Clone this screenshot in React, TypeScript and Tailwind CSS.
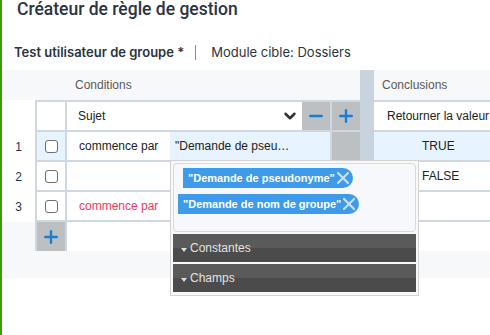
import { ChevronDown, Minus, Plus, X } from 'lucide-react'

const rows = [
  { n: '1', op: 'commence par', value: '"Demande de pseu…', result: 'TRUE', active: true, warn: false },
  { n: '2', op: '', value: '', result: 'FALSE', active: false, warn: false },
  { n: '3', op: 'commence par', value: '', result: '', active: false, warn: true },
]

function Checkbox() {
  return <span className="block w-[13px] h-[13px] rounded-[3px] border-[1.5px] border-[#6f6f6f] bg-white" />
}

function Chip({ label, className }: { label: string; className?: string }) {
  return (
    <div className={`flex items-center h-[20px] pl-[5px] pr-[2px] bg-[#3d9be9] rounded-l-[2px] rounded-r-full text-white text-[11px] font-bold w-fit ${className ?? ''}`}>
      <span>{label}</span>
      <X size={20} strokeWidth={2.6} className="text-[#cde0f3] -ml-[2px] -mr-[2px]" />
    </div>
  )
}

function Section({ label }: { label: string }) {
  return (
    <div className="h-[28px] flex items-center pl-[8px] gap-[3px] bg-[linear-gradient(#5a5a5a_50%,#4b4b4b_50%)] text-[#e2e2e2] text-[12px]">
      <svg width="6" height="4" viewBox="0 0 6 4" className="mt-[3px]">
        <path d="M0 0h6L3 4z" fill="#dcdcdc" />
      </svg>
      <span>{label}</span>
    </div>
  )
}

export default function App() {
  return (
    <div className="w-[490px] h-[335px] overflow-hidden bg-white border-l-2 border-[#3f9b0b] font-['Liberation_Sans',Arial,sans-serif]">
      {/* Title */}
      <div className="pl-[15px] text-[17.5px] leading-[18px] font-medium text-[#2b3440] font-['Roboto',sans-serif]">
        Créateur de règle de gestion
      </div>
      <div className="pl-[12px] mt-[26px] h-[16px] flex items-center text-[13px] leading-[16px] text-[#2b3440] font-['Inter',sans-serif]">
        <span className="font-semibold">Test utilisateur de groupe *</span>
        <span className="ml-[11px] w-px h-[15px] bg-[#8a8f96]" />
        <span className="ml-[15px]">Module cible: Dossiers</span>
      </div>

      {/* Rule table */}
      <div className="relative mt-[10px] h-[208px] bg-[#f7f8fa] text-[12px] text-[#222]">
        <div className="flex h-[30px]">
          <div className="w-[358px] flex items-center pl-[73px] text-[#5a5a5a]">Conditions</div>
          <div className="w-[14px] bg-[#c9d3dd]" />
          <div className="flex-1 flex items-center pl-[8px] text-[#5a5a5a]">Conclusions</div>
        </div>

        <div className="flex h-[32px]">
          <div className="w-[33px] bg-white" />
          <div className="w-[32px] bg-white border-2 border-[#cfd8e1]" />
          <div className="w-[235px] bg-white border-y-2 border-[#cfd8e1] flex items-center justify-between pl-[11px] pr-[3px]">
            <span>Sujet</span>
            <ChevronDown size={18} strokeWidth={3.3} className="text-[#333]" />
          </div>
          <div className="w-[28px] bg-[#bcc0c3] border-y-2 border-[#cfd8e1] flex items-center justify-center">
            <Minus size={20} strokeWidth={2.8} className="text-[#1a7dd3]" />
          </div>
          <div className="w-[30px] bg-[#bcc0c3] border-y-2 border-l-2 border-[#cfd8e1] flex items-center justify-center">
            <Plus size={20} strokeWidth={2.8} className="text-[#1a7dd3]" />
          </div>
          <div className="w-[14px] bg-[#c9d3dd]" />
          <div className="flex-1 bg-white border-y-2 border-[#cfd8e1] flex items-center pl-[13px] whitespace-nowrap overflow-hidden">
            Retourner la valeur
          </div>
        </div>

        {rows.map((r) => (
          <div key={r.n} className="flex h-[30px]">
            <div className="w-[33px] bg-white flex items-center justify-center text-[#1e3550]">{r.n}</div>
            <div className={`w-[32px] border-x-2 border-b-2 border-[#cfd8e1] flex items-center justify-center ${r.active ? 'bg-[#e7f3fe]' : 'bg-white'}`}>
              <Checkbox />
            </div>
            <div className={`w-[103px] bg-white border-b-2 border-[#cfd8e1] flex items-center pl-[12px] ${r.warn ? 'text-[#ee3a5c]' : ''}`}>
              {r.op}
            </div>
            <div className={`w-[160px] border-b-2 border-[#cfd8e1] flex items-center pl-[5px] whitespace-nowrap ${r.active ? 'bg-[#e7f3fe]' : 'bg-white'}`}>
              {r.value}
            </div>
            <div className={`w-[30px] border-l-2 border-b-2 border-[#cfd8e1] ${r.active ? 'bg-[#bcc0c3]' : 'bg-white'}`} />
            <div className="w-[14px] bg-[#c9d3dd]" />
            <div className={`flex-1 border-b-2 border-[#cfd8e1] flex items-center pl-[48px] ${r.active ? 'bg-[#e7f3fe]' : 'bg-white'}`}>
              {r.result}
            </div>
          </div>
        ))}

        <div className="flex h-[29px]">
          <div className="w-[33px]" />
          <div className="w-[32px] bg-[#bcc0c3] border-x-2 border-[#cfd8e1] flex items-center justify-center">
            <Plus size={20} strokeWidth={2.8} className="text-[#1a7dd3]" />
          </div>
          <div className="w-[293px] bg-white" />
          <div className="w-[14px] bg-[#c9d3dd]" />
          <div className="flex-1 bg-white" />
        </div>

        {/* Value picker popup */}
        <div className="absolute left-[168px] top-[90px] w-[249px] h-[136px] bg-[#f8f8f8] border-[1.5px] border-[#d2d2d2] p-[2px] flex flex-col gap-[2px]">
          <div className="h-[69px] rounded-[4px] border border-[#d3dbe4] bg-[#f6f8fb] pt-[4px] flex flex-col gap-[6px]">
            <Chip label={'"Demande de pseudonyme"'} className="ml-[9px]" />
            <Chip label={'"Demande de nom de groupe"'} className="ml-[4px]" />
          </div>
          <Section label="Constantes" />
          <Section label="Champs" />
        </div>
      </div>
    </div>
  )
}
